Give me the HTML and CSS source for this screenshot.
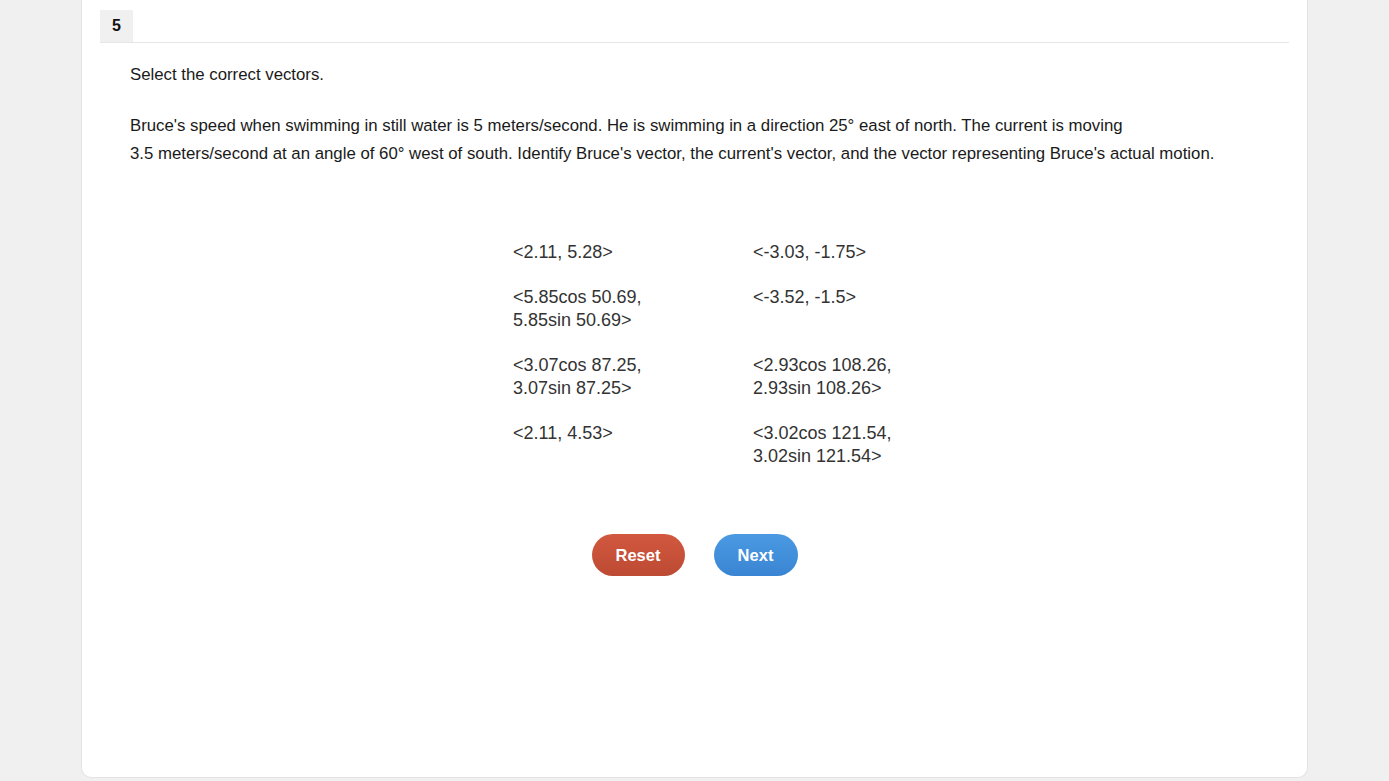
FILE: index.html
```html
<!DOCTYPE html>
<html>
<head>
<meta charset="utf-8">
<link rel="stylesheet" href="styles.css">
</head>
<body>
<div class="card">
  <div class="tabbar"><div class="tab">5</div></div>
  <div class="content">
    <p class="prompt">Select the correct vectors.</p>
    <p class="question">Bruce's speed when swimming in still water is 5 meters/second. He is swimming in a direction 25° east of north. The current is moving<br>3.5 meters/second at an angle of 60° west of south. Identify Bruce's vector, the current's vector, and the vector representing Bruce's actual motion.</p>
    <div class="options">
      <div class="opt">&lt;2.11, 5.28&gt;</div>
      <div class="opt">&lt;-3.03, -1.75&gt;</div>
      <div class="opt">&lt;5.85cos 50.69,<br>5.85sin 50.69&gt;</div>
      <div class="opt">&lt;-3.52, -1.5&gt;</div>
      <div class="opt">&lt;3.07cos 87.25,<br>3.07sin 87.25&gt;</div>
      <div class="opt">&lt;2.93cos 108.26,<br>2.93sin 108.26&gt;</div>
      <div class="opt">&lt;2.11, 4.53&gt;</div>
      <div class="opt">&lt;3.02cos 121.54,<br>3.02sin 121.54&gt;</div>
    </div>
    <div class="buttons">
      <button class="btn reset">Reset</button>
      <button class="btn next">Next</button>
    </div>
  </div>
</div>
</body>
</html>
```
FILE: styles.css
```css
html, body {
  margin: 0;
  padding: 0;
  background: #f0f0f0;
  font-family: "Liberation Sans", Arial, sans-serif;
}
.card {
  box-sizing: border-box;
  width: 1227px;
  height: 778px;
  margin: 0 0 0 81px;
  background: #fff;
  border: 1px solid #e3e3e3;
  border-top: none;
  border-radius: 0 0 10px 10px;
  padding: 10px 18px 0 18px;
}
.tabbar {
  display: flex;
  border-bottom: 1px solid #e6e6e6;
}
.tab {
  width: 33px;
  height: 32px;
  background: #f0f0f0;
  font-weight: bold;
  font-size: 16px;
  color: #111;
  display: flex;
  align-items: center;
  justify-content: center;
}
.content {
  padding-left: 30px;
}
.prompt {
  margin: 21px 0 0 0;
  font-size: 16.8px;
  line-height: 22px;
  color: #1a1a1a;
}
.question {
  margin: 26px 0 0 0;
  font-size: 16.8px;
  line-height: 28px;
  color: #1a1a1a;
}
.options {
  display: grid;
  grid-template-columns: 240px 240px;
  row-gap: 22px;
  margin: 73px 0 0 383px;
  font-size: 18px;
  line-height: 23px;
  color: #333;
}
.buttons {
  display: flex;
  justify-content: center;
  gap: 29px;
  margin-top: 66px;
  padding-right: 30px;
}
.btn {
  height: 42px;
  border: none;
  border-radius: 21px;
  color: #fff;
  font-family: "Liberation Sans", Arial, sans-serif;
  font-weight: bold;
  font-size: 16.5px;
  padding: 0;
}
.reset {
  width: 93px;
  background: linear-gradient(#d2583f, #bd4a33);
}
.next {
  width: 84px;
  background: linear-gradient(#4a9ae2, #3a85d3);
}
```
